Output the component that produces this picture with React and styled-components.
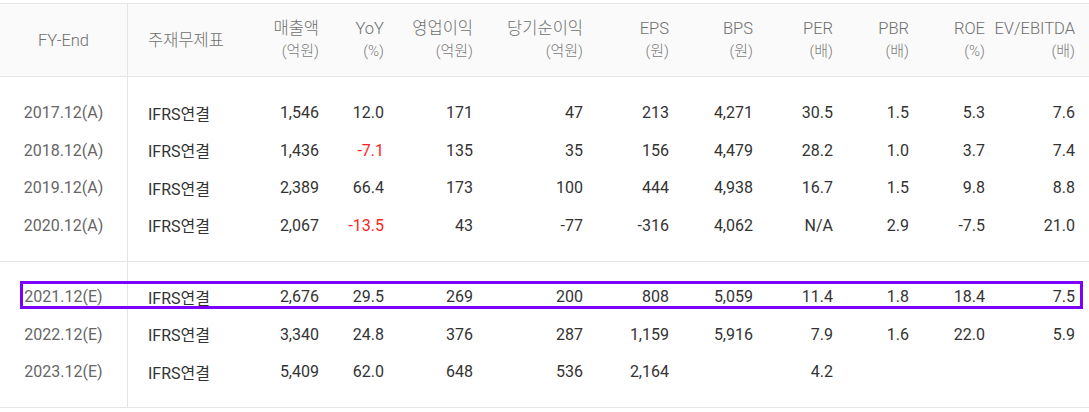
import React from 'react';
import styled, { createGlobalStyle } from 'styled-components';

const GlobalStyle = createGlobalStyle`
  body {
    margin: 0;
    background: #fff;
    font-family: Roboto, "Noto Sans CJK KR", sans-serif;
  }
`;

const COLS = '127px 130px 76px 65px 89px 110px 86px 84px 80px 76px 76px 90px';

const Table = styled.div`
  width: 1089px;
  margin-top: 3px;
  border-top: 1px solid #e6e6e6;
  background: linear-gradient(#e4e4e4, #e4e4e4) 127px 0 / 1px 100% no-repeat;
`;

const Head = styled.div`
  display: grid;
  grid-template-columns: ${COLS};
  height: 72px;
  background: linear-gradient(#e4e4e4, #e4e4e4) 127px 0 / 1px 100% no-repeat, #fafafa;
  border-bottom: 1px solid #e6e6e6;
`;

const HeadCell = styled.div`
  display: flex;
  flex-direction: column;
  justify-content: center;
  align-items: ${p => (p.$align === 'center' ? 'center' : p.$align === 'left' ? 'flex-start' : 'flex-end')};
  padding: ${p => (p.$align === 'left' ? '0 0 0 21px' : p.$align === 'center' ? '0' : '0 14px 0 0')};
  color: #6f6f6f;
  font-size: 16.5px;
  font-weight: 300;
  line-height: 23px;
  white-space: nowrap;
`;

const Unit = styled.span`
  font-size: 15px;
  color: #7c7c7c;
`;

const Section = styled.div`
  padding: ${p => p.$pad}px 0;
  border-bottom: 1px solid #e6e6e6;
`;

const Row = styled.div`
  position: relative;
  display: grid;
  grid-template-columns: ${COLS};
  height: 37.5px;
  align-items: center;
  font-size: 16px;
  color: #333;
`;

const Highlight = styled.div`
  position: absolute;
  left: 20px;
  right: 6px;
  top: 3px;
  height: 28px;
  border: 3px solid #7d00ff;
  box-sizing: border-box;
  pointer-events: none;
`;

const YearCell = styled.div`
  text-align: center;
  color: #666;
`;

const TypeCell = styled.div`
  padding-left: 21px;
  color: #333;
`;

const NumCell = styled.div`
  text-align: right;
  padding-right: 14px;
  color: ${p => (p.$neg ? '#ff1e1e' : '#333')};
`;

const headers = [
  ['매출액', '(억원)'],
  ['YoY', '(%)'],
  ['영업이익', '(억원)'],
  ['당기순이익', '(억원)'],
  ['EPS', '(원)'],
  ['BPS', '(원)'],
  ['PER', '(배)'],
  ['PBR', '(배)'],
  ['ROE', '(%)'],
  ['EV/EBITDA', '(배)'],
];

const actual = [
  ['2017.12(A)', '1,546', '12.0', '171', '47', '213', '4,271', '30.5', '1.5', '5.3', '7.6'],
  ['2018.12(A)', '1,436', '-7.1', '135', '35', '156', '4,479', '28.2', '1.0', '3.7', '7.4'],
  ['2019.12(A)', '2,389', '66.4', '173', '100', '444', '4,938', '16.7', '1.5', '9.8', '8.8'],
  ['2020.12(A)', '2,067', '-13.5', '43', '-77', '-316', '4,062', 'N/A', '2.9', '-7.5', '21.0'],
];

const estimates = [
  ['2021.12(E)', '2,676', '29.5', '269', '200', '808', '5,059', '11.4', '1.8', '18.4', '7.5'],
  ['2022.12(E)', '3,340', '24.8', '376', '287', '1,159', '5,916', '7.9', '1.6', '22.0', '5.9'],
  ['2023.12(E)', '5,409', '62.0', '648', '536', '2,164', '', '4.2', '', '', ''],
];

const DataRow = ({ cells, highlight }) => {
  const [year, ...nums] = cells;
  return (
    <Row>
      {highlight && <Highlight />}
      <YearCell>{year}</YearCell>
      <TypeCell>IFRS연결</TypeCell>
      {nums.map((v, i) => (
        <NumCell key={i} $neg={i === 1 && v.startsWith('-')}>{v}</NumCell>
      ))}
    </Row>
  );
};

const App = () => {
  return (
    <>
      <GlobalStyle />
      <Table>
        <Head>
          <HeadCell $align="center">FY-End</HeadCell>
          <HeadCell $align="left">주재무제표</HeadCell>
          {headers.map(([title, unit]) => (
            <HeadCell key={title}>
              <span>{title}</span>
              <Unit>{unit}</Unit>
            </HeadCell>
          ))}
        </Head>
        <Section $pad={17}>
          {actual.map(r => (
            <DataRow key={r[0]} cells={r} />
          ))}
        </Section>
        <Section $pad={16}>
          {estimates.map((r, i) => (
            <DataRow key={r[0]} cells={r} highlight={i === 0} />
          ))}
        </Section>
      </Table>
    </>
  );
};

export default App;
